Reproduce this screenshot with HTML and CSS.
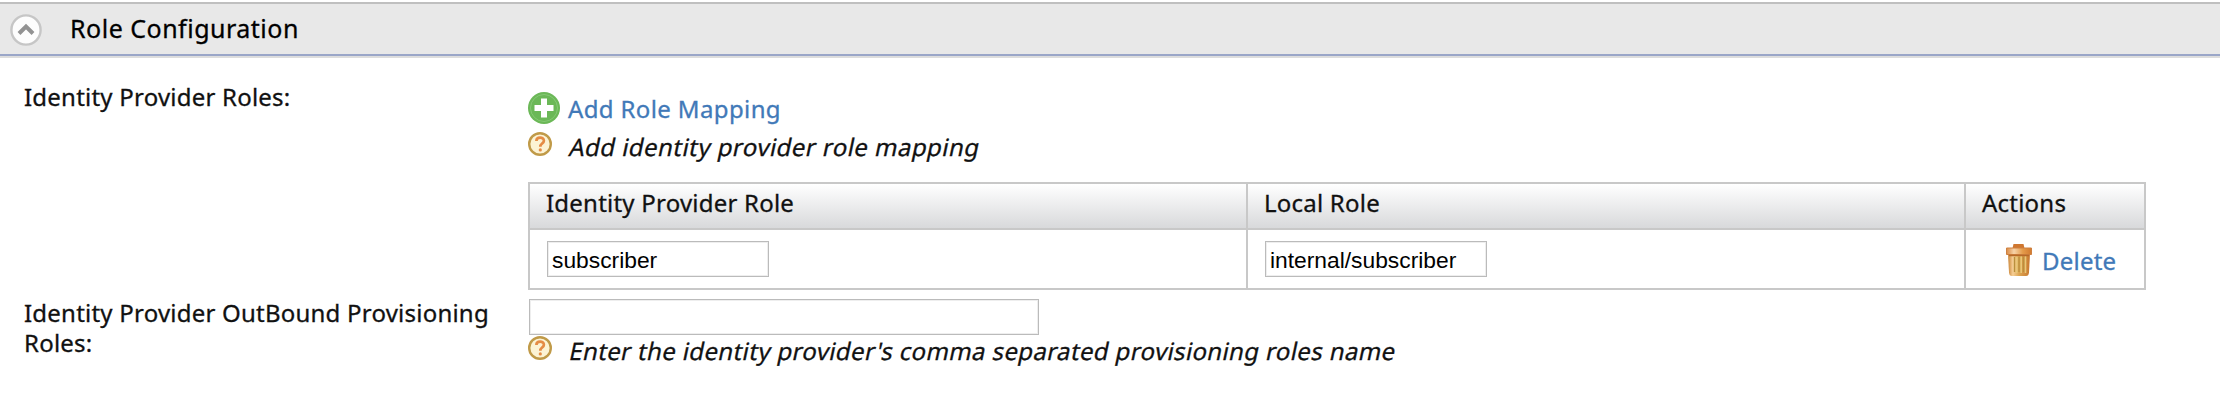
FILE: index.html
```
<!DOCTYPE html>
<html lang="en">
<head>
<meta charset="utf-8">
<title>Role Configuration</title>
<link rel="stylesheet" href="styles.css">
</head>
<body>
<svg class="defs" width="0" height="0">
  <defs>
    <linearGradient id="bin" x1="0" x2="1" y1="0" y2="0">
      <stop offset="0" stop-color="#c98335"/><stop offset=".22" stop-color="#f6cf96"/>
      <stop offset=".5" stop-color="#dda653"/><stop offset="1" stop-color="#c8782f"/>
    </linearGradient>
    <linearGradient id="lid" x1="0" x2="1" y1="0" y2="0">
      <stop offset="0" stop-color="#d98a45"/><stop offset=".3" stop-color="#f7d3a8"/>
      <stop offset=".65" stop-color="#e49b4a"/><stop offset="1" stop-color="#d27a30"/>
    </linearGradient>
    <symbol id="help" viewBox="0 0 24 24">
      <circle cx="12" cy="12" r="10.8" fill="#fcf3d4" stroke="#c09a48" stroke-width="2.4"/>
      <path d="M8.400 8.900c0-4.300 7.500-4.300 7.500-.2 0 2.900-3.600 2.900-3.600 6" fill="none" stroke="#e58c45" stroke-width="2.700"/>
      <circle cx="12.300" cy="17.900" r="1.600" fill="#e58c45"/>
    </symbol>
  </defs>
</svg>
<header class="section-head">
  <svg class="toggle" viewBox="0 0 32 32">
    <circle cx="16" cy="16" r="14.600" fill="#fdfdfd" stroke="#c6c6c6" stroke-width="2.400"/>
    <path d="M9 19.500l7-7 7 7" fill="none" stroke="#929292" stroke-width="4"/>
  </svg>
  <h2 class="title">Role Configuration</h2>
</header>
<main class="form">
  <div class="label">Identity Provider Roles:</div>
  <div class="roles">
    <a class="link add">
      <svg class="icon" viewBox="0 0 32 32">
        <circle cx="16" cy="16" r="16" fill="#6bb857"/>
        <circle cx="16" cy="16" r="13.500" fill="none" stroke="#85c974" stroke-width="1"/>
        <path d="M13 6.500h6V13h6.500v6H19v6.500h-6V19H6.500v-6H13z" fill="#fff"/>
      </svg>
      <span class="add-text">Add Role Mapping</span>
    </a>
    <div class="hint"><svg class="help"><use href="#help"/></svg><span>Add identity provider role mapping</span></div>
    <div class="table">
      <div class="cell head">Identity Provider Role</div>
      <div class="cell head">Local Role</div>
      <div class="cell head">Actions</div>
      <div class="cell"><input class="field" type="text" value="subscriber"></div>
      <div class="cell"><input class="field" type="text" value="internal/subscriber"></div>
      <div class="cell actions">
        <a class="link">
          <svg class="trash" viewBox="0 0 28 32">
            <path d="M8.500 0h10l1 4.500h-12z" fill="#cf7730"/>
            <path d="M3 10h22l-1 18.500q-.3 3.500-3 3.500H7q-2.700 0-3-3.500z" fill="url(#bin)"/>
            <path d="M9.500 13v15M14 13v15M18.500 13v15" stroke="#b9903c" stroke-width="1.300"/>
            <path d="M11.700 12v17M16.200 12v17M20.500 12v17" stroke="#e8c878" stroke-width="1.600"/>
            <path d="M1.500 4H26.500V10.500H1.500z" fill="url(#lid)" stroke="#ce8040" stroke-width="1"/>
            <path d="M4 11.500h20" stroke="#b56a28" stroke-width="1.500"/>
          </svg>
          <span class="delete-text">Delete</span>
        </a>
      </div>
    </div>
  </div>
  <div class="label outbound">Identity Provider OutBound Provisioning Roles:</div>
  <div class="provisioning">
    <input class="field wide" type="text">
    <div class="hint last"><svg class="help"><use href="#help"/></svg><span>Enter the identity provider's comma separated provisioning roles name</span></div>
  </div>
</main>
</body>
</html>
```
FILE: styles.css
```
* { box-sizing: border-box; }
body {
  margin: 0;
  padding-top: 2px;
  background: #fff;
  color: #111;
  font: 24px/30px "Noto Sans", "Open Sans", sans-serif;
  letter-spacing: .22px;
  -webkit-text-stroke: .3px currentColor;
}
.defs { position: absolute; }
svg { display: block; flex: none; }
.section-head {
  display: flex;
  height: 56px;
  padding-left: 10px;
  border-top: 2px solid #bfbfbf;
  border-bottom: 2px solid #ddd;
  background: #e8e8e8;
  box-shadow: inset 0 -2px #9aa6c8;
}
.toggle { width: 32px; height: 32px; margin-top: 10px; }
.title {
  margin: 9px 0 0 28px;
  font-size: 25px;
  font-weight: 400;
  letter-spacing: .5px;
  color: #000;
}
.form {
  display: grid;
  grid-template-columns: 504px 1618px;
  padding-left: 24px;
}
.label { padding-top: 24px; }
.roles { padding-top: 34px; }
.link { display: flex; color: #4179b8; }
.add { height: 32px; letter-spacing: .37px; }
.icon { width: 32px; height: 32px; }
.add-text { margin-left: 8px; padding-top: 2px; }
.hint {
  display: flex;
  height: 50px;
  padding-top: 8px;
  letter-spacing: .46px;
}
.hint span {
  height: 30px;
  margin-left: 16px;
  transform: skewX(-12deg);
  transform-origin: 0 24px;
}
.help { width: 24px; height: 24px; }
.table {
  display: grid;
  grid-template-columns: 718px 718px 180px;
  width: 1618px;
  margin-top: 8px;
  border-top: 2px solid #c8c8c8;
  border-left: 2px solid #c8c8c8;
}
.cell {
  height: 60px;
  padding: 11px 0 0 17px;
  border-right: 2px solid #c8c8c8;
  border-bottom: 2px solid #c8c8c8;
}
.head {
  height: 46px;
  padding: 4px 0 0 16px;
  background: linear-gradient(#fff, #d8d9db);
}
.field {
  display: block;
  width: 222px;
  height: 36px;
  padding: 3px 4px 0;
  border: 1px solid #bbb;
  box-shadow: inset 0 0 0 1px #eee;
  background: #fff;
  color: #000;
  font: 22.8px "Liberation Sans", Arial, sans-serif;
  -webkit-text-stroke: 0;
}
.actions { padding: 14px 0 0 39px; }
.trash { width: 28px; height: 32px; margin-right: 9px; }
.delete-text { padding-top: 2px; }
.outbound { padding-top: 8px; }
.provisioning { padding-top: 9px; }
.wide { width: 510px; margin-left: 1px; }
.last { padding-top: 1px; letter-spacing: .37px; }
```
